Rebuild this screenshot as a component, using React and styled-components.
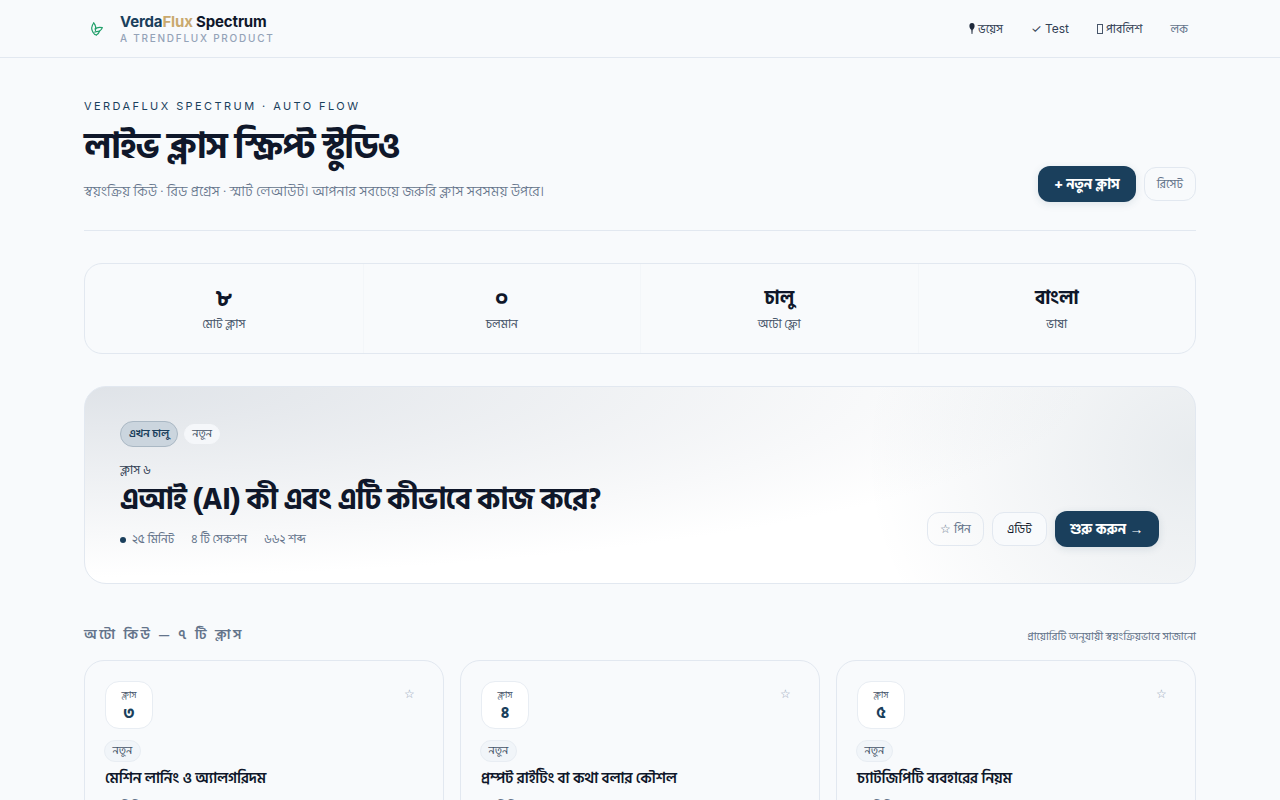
import React from "react";
import styled, { createGlobalStyle } from "styled-components";

const Global = createGlobalStyle`
  html, body { margin: 0; padding: 0; background: #f8fafc; }
  body { font-family: "Hind Siliguri", sans-serif; color: #0f172a; }
  * { box-sizing: border-box; }
  button { font-family: inherit; }
`;
const Nav = styled.header`
  height: 58px; padding: 0 84px; display: flex; align-items: center; justify-content: space-between;
  border-bottom: 1px solid #e2e8f0; background: #f8fafc;
`;
const Brand = styled.div`display: flex; align-items: center; gap: 14px;`;
const LogoBox = styled.div`width: 22px; height: 28px; padding-left: 4px; display: flex; align-items: center; justify-content: center;`;
const BrandText = styled.div`display: flex; flex-direction: column; font-family: Inter, sans-serif; padding-top: 1px;`;
const BrandName = styled.div`font-size: 15px; font-weight: 700; line-height: 18px; letter-spacing: -0.15px; color: #0f172a;`;
const Verda = styled.span`color: #1a3f5c;`;
const Flux = styled.span`color: #c9a96e;`;
const BrandSub = styled.div`font-size: 10px; line-height: 14px; letter-spacing: 1.75px; color: #94a3b8; font-weight: 500;`;
const NavLinks = styled.nav`display: flex; align-items: center; gap: 12px; font-family: Inter, "Hind Siliguri", sans-serif;`;
const NavLink = styled.a`
  padding: 6px 8px; font-size: 12px; line-height: 18px; white-space: nowrap;
  color: ${p => p.$muted ? "#64748b" : "#334155"};
`;
const MicGlyph = styled.svg`width: 6px; height: 11px; margin-right: 3px; vertical-align: -1px;`;
const Tofu = styled.span`
  display: inline-block; width: 6px; height: 10px; margin-right: 3px; border: 1px solid #475569; vertical-align: -1px;
`;
const Main = styled.main`padding: 0 84px;`;
const Head = styled.section`
  padding: 40px 0 27px; display: flex; justify-content: space-between; align-items: flex-end;
  border-bottom: 1px solid #e2e8f0; height: 173px;
`;
const HeadCopy = styled.div``;
const Eyebrow = styled.div`font-family: Inter, sans-serif; font-size: 11px; line-height: 16px; letter-spacing: 2.42px; color: #1a3f5c; font-weight: 400;`;
const Title = styled.h1`margin: 10px 0 11px; font-size: 36px; line-height: 46px; font-weight: 700; letter-spacing: -1.15px; color: #0f172a;`;
const Sub = styled.p`margin: 0; font-size: 14.5px; line-height: 22px; color: #64748b; font-weight: 300;`;
const HeadActions = styled.div`display: flex; align-items: center; gap: 8px; margin-bottom: 1px;`;
const Primary = styled.button`
  border: 0; border-radius: 12px; background: #1a3f5c; color: #fff; font-weight: 700;
  font-size: 14px; line-height: 20px; padding: 9px ${p => p.$hero ? "15.5px" : "16px"} 7px; height: 36px; white-space: nowrap;
  box-shadow: 0 2px 8px rgba(26,63,92,.12);
`;
const Ghost = styled.button`
  border: 1px solid #e2e8f0; border-radius: 12px; background: ${p => p.$fill || "transparent"}; color: ${p => p.$dark ? "#0f172a" : "#64748b"};
  font-size: 12px; line-height: 18px; padding: 8px ${p => p.$wide ? "14px" : "12px"} 6px; height: 34px; white-space: nowrap;
`;
const Stats = styled.section`
  margin-top: 32px; height: 91px; border: 1px solid #e2e8f0; border-radius: 18px;
  display: grid; grid-template-columns: repeat(4, 1fr);
`;
const Stat = styled.div`
  display: flex; flex-direction: column; align-items: center; justify-content: center;
  ${p => p.$first ? "" : "border-left: 1px solid #f3f6f9;"}
`;
const StatValue = styled.div`font-size: ${p => p.$word ? "19px" : "22px"}; line-height: 28px; font-weight: 700; color: #0f172a;`;
const StatLabel = styled.div`font-size: 12px; line-height: 16px; color: #475569; margin-top: 4px;`;
const Hero = styled.section`
  margin-top: 32px; height: 198px; border: 1px solid #e2e8f0; border-radius: 22px; padding: 34px 36px 36px 35px;
  display: flex; justify-content: space-between; align-items: flex-end;
  background:
    radial-gradient(ellipse 330px 300px at 100% 35%, rgba(26,63,92,.1), rgba(26,63,92,0) 100%),
    radial-gradient(ellipse 1000px 190px at 0 0, #dfe3e8, rgba(255,255,255,0) 100%),
    #fff;
`;
const HeroCopy = styled.div`align-self: flex-start;`;
const Tags = styled.div`display: flex; align-items: center; gap: 6px;`;
const LiveTag = styled.span`
  font-size: 11px; line-height: 16px; font-weight: 600; padding: 4px 8px; border-radius: 99px;
  background: #cbd5de; border: 1px solid #aab8c4; color: #1a3f5c;
`;
const NewTag = styled.span`
  font-size: 11px; line-height: 16px; padding: 2px 7.5px; border-radius: 99px; background: #f1f5f9;
  color: #475569; display: inline-block; border: 1px solid #e8edf3;
`;
const HeroNew = styled(NewTag)`background: #f5f7fa; border-color: #f5f7fa; padding: 1px 7px;`;
const HeroNum = styled.div`font-size: 12px; line-height: 16px; margin-top: 16px; color: #334155;`;
const HeroTitle = styled.h2`margin: 2px 0 12px; font-size: 30px; line-height: 38px; font-weight: 700; letter-spacing: -0.8px; color: #0f172a;`;
const Meta = styled.div`display: flex; align-items: center; gap: 17px; font-size: 12px; line-height: 18px; color: #64748b;`;
const MetaFirst = styled.span`display: flex; align-items: center; gap: 6px;`;
const Dot = styled.i`width: 6px; height: 6px; border-radius: 50%; background: #1a3f5c;`;
const HeroActions = styled.div`display: flex; align-items: center; gap: 8px;`;
const QHead = styled.div`margin-top: 40px; display: flex; justify-content: space-between; align-items: center; height: 20px;`;
const QTitle = styled.h3`margin: 1px 0 0; font-size: 14px; line-height: 22px; font-weight: 600; letter-spacing: 2.55px; color: #64748b;`;
const QNote = styled.span`font-size: 11px; color: #64748b; margin-top: 6px;`;
const Grid = styled.div`margin-top: 16px; display: grid; grid-template-columns: repeat(3, 1fr); gap: 16px; padding-bottom: 40px;`;
const Card = styled.article`height: 210px; border: 1px solid #e2e8f0; border-radius: 20px; padding: 20px;`;
const CardTop = styled.div`display: flex; justify-content: space-between; align-items: flex-start;`;
const NumBox = styled.div`
  width: 48px; height: 48px; background: #fff; border: 1px solid #e8edf3; border-radius: 14px;
  display: flex; flex-direction: column; align-items: center; justify-content: center;
`;
const NumLabel = styled.span`font-size: 9px; line-height: 12px; color: #475569; margin-top: 2px;`;
const NumValue = styled.span`font-size: 16px; line-height: 20px; font-weight: 700; color: #1a3f5c; margin-top: 1px;`;
const Star = styled.span`font-size: 12px; line-height: 16px; color: #94a3b8; margin: 6px 8px 0 0;`;
const CardTag = styled.div`margin: 7px 0 0 -1px;`;
const CardTitle = styled.h4`margin: 6px 0 8px; font-size: 15px; line-height: 22px; font-weight: 600; letter-spacing: -0.15px; color: #0f172a;`;
const CardMeta = styled.div`display: flex; gap: 14px; font-size: 12px; line-height: 18px; color: #64748b;`;
const Leaf = () => (
  <svg width="16" height="16" viewBox="0 0 24 24" fill="none" stroke="#22a06b" strokeWidth="1.8" strokeLinecap="round" strokeLinejoin="round">
    <path d="M7 3c-3 4-4 9-1 14 1 2 3 4 5 4" />
    <path d="M7 3c3 3 4 8 2 14" />
    <path d="M9 12c3-3 7-3 11-2-1 3-5 6-9 6" />
    <path d="M11 21c2-1 4-3 5-6" />
  </svg>
);
const Mic = () => (
  <MicGlyph viewBox="0 0 6 11">
    <path d="M3 0C1.2 0 .4 1.3.4 3c0 1.800 1 3.200 1.900 3.800L2.600 11h.8l.3-4.200C4.600 6.200 5.600 4.800 5.600 3 5.600 1.300 4.800 0 3 0z" fill="#1e293b" />
  </MicGlyph>
);
const cards = [
  ["৩", "মেশিন লার্নিং ও অ্যালগরিদম"],
  ["৪", "প্রম্পট রাইটিং বা কথা বলার কৌশল"],
  ["৫", "চ্যাটজিপিটি ব্যবহারের নিয়ম"],
];
export default function App() {
  return (
    <>
      <Global />
      <Nav>
        <Brand>
          <LogoBox><Leaf /></LogoBox>
          <BrandText>
            <BrandName><Verda>Verda</Verda><Flux>Flux</Flux> Spectrum</BrandName>
            <BrandSub>A TRENDFLUX PRODUCT</BrandSub>
          </BrandText>
        </Brand>
        <NavLinks>
          <NavLink><Mic />ভয়েস</NavLink>
          <NavLink>✓ Test</NavLink>
          <NavLink><Tofu />পাবলিশ</NavLink>
          <NavLink $muted>লক</NavLink>
        </NavLinks>
      </Nav>
      <Main>
        <Head>
          <HeadCopy>
            <Eyebrow>VERDAFLUX SPECTRUM · AUTO FLOW</Eyebrow>
            <Title>লাইভ ক্লাস স্ক্রিপ্ট স্টুডিও</Title>
            <Sub>স্বয়ংক্রিয় কিউ · রিড প্রগ্রেস · স্মার্ট লেআউট। আপনার সবচেয়ে জরুরি ক্লাস সবসময় উপরে।</Sub>
          </HeadCopy>
          <HeadActions>
            <Primary>+ নতুন ক্লাস</Primary>
            <Ghost>রিসেট</Ghost>
          </HeadActions>
        </Head>
        <Stats>
          <Stat $first><StatValue>৮</StatValue><StatLabel>মোট ক্লাস</StatLabel></Stat>
          <Stat><StatValue>০</StatValue><StatLabel>চলমান</StatLabel></Stat>
          <Stat><StatValue $word>চালু</StatValue><StatLabel>অটো ফ্লো</StatLabel></Stat>
          <Stat><StatValue $word>বাংলা</StatValue><StatLabel>ভাষা</StatLabel></Stat>
        </Stats>
        <Hero>
          <HeroCopy>
            <Tags><LiveTag>এখন চালু</LiveTag><HeroNew>নতুন</HeroNew></Tags>
            <HeroNum>ক্লাস ৬</HeroNum>
            <HeroTitle>এআই (AI) কী এবং এটি কীভাবে কাজ করে?</HeroTitle>
            <Meta>
              <MetaFirst><Dot />২৫ মিনিট</MetaFirst>
              <span>৪ টি সেকশন</span>
              <span>৬৬২ শব্দ</span>
            </Meta>
          </HeroCopy>
          <HeroActions>
            <Ghost>☆ পিন</Ghost>
            <Ghost $dark $wide $fill="#f8fafc">এডিট</Ghost>
            <Primary $hero>শুরু করুন →</Primary>
          </HeroActions>
        </Hero>
        <QHead>
          <QTitle>অটো কিউ — ৭ টি ক্লাস</QTitle>
          <QNote>প্রায়োরিটি অনুযায়ী স্বয়ংক্রিয়ভাবে সাজানো</QNote>
        </QHead>
        <Grid>
          {cards.map(([n, t]) => (
            <Card key={n}>
              <CardTop>
                <NumBox><NumLabel>ক্লাস</NumLabel><NumValue>{n}</NumValue></NumBox>
                <Star>☆</Star>
              </CardTop>
              <CardTag><NewTag>নতুন</NewTag></CardTag>
              <CardTitle>{t}</CardTitle>
              <CardMeta><span>২০ মিনিট</span></CardMeta>
            </Card>
          ))}
        </Grid>
      </Main>
    </>
  );
}
